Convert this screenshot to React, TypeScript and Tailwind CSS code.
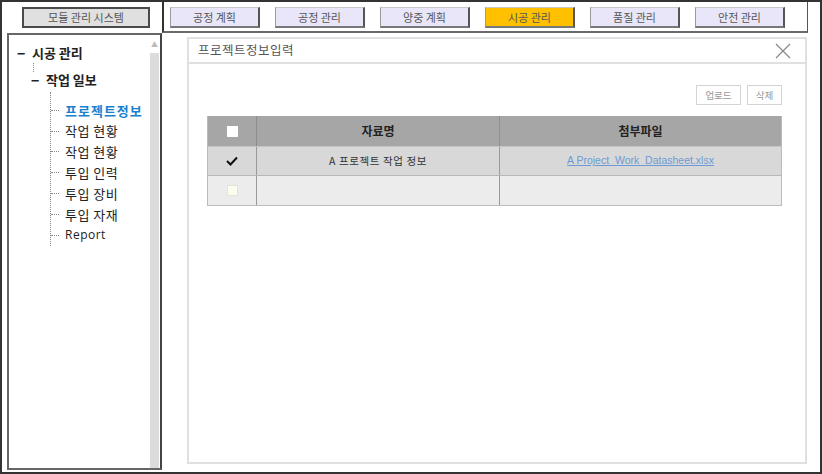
import React from "react";

const navItems = ["공정 계획", "공정 관리", "양중 계획", "시공 관리", "품질 관리", "안전 관리"];
const treeItems = ["프로젝트정보", "작업 현황", "작업 현황", "투입 인력", "투입 장비", "투입 자재", "Report"];

const font = { fontFamily: '"Noto Sans CJK KR", "Noto Sans", sans-serif' };

function NavButton({ label }: { label: string }) {
  const active = label === "시공 관리";
  return (
    <div
      className={
        "w-[90px] h-[21px] flex items-center justify-center text-[11px] border border-l-[#9a9a9a] border-t-[#c8c8c8] border-r-2 border-b-2 border-r-[#555] border-b-[#777] " +
        (active ? "bg-[#ffc000] text-[#555]" : "bg-[#e8e6f8] text-[#555]")
      }
    >
      {label}
    </div>
  );
}

export default function App() {
  return (
    <div className="w-[822px] h-[474px] border-2 border-[#333] bg-white flex flex-col overflow-hidden" style={font}>
      {/* top bar */}
      <div className="h-[31px] flex shrink-0">
        <div className="w-[160px] pl-[20px] pt-[5px]">
          <div className="w-[128px] h-[21px] bg-[#e0e0e0] border-2 border-[#4a4a4a] flex items-center justify-center text-[11px] text-[#555]">
            모듈 관리 시스템
          </div>
        </div>
        <div className="w-[646px] border-l-2 border-r border-b-2 border-l-[#333] border-r-[#555] border-b-[#6a6a6a] flex items-start pt-[5px] pl-[6px] gap-[15px]">
          {navItems.map((n) => (
            <NavButton key={n} label={n} />
          ))}
        </div>
      </div>

      <div className="flex flex-1">
        {/* sidebar */}
        <div className="ml-[5px] w-[155px] h-[437px] border-2 border-[#666] border-r-[#444] flex">
          <div className="flex-1 relative pt-[8px]">
            <div className="flex items-center h-[20px] pl-[8px] text-[13px] font-bold text-[#222]">
              <span className="w-[15px] text-[14px]">−</span>
              <span>시공 관리</span>
            </div>
            <div className="ml-[24px] h-[9px] w-0 border-l border-dotted border-[#888]" />
            <div className="flex items-center h-[16px] pl-[22px] text-[13px] font-bold text-[#222]">
              <span className="w-[15px] text-[14px]">−</span>
              <span>작업 일보</span>
            </div>
            <div className="ml-[41px] mt-[4px] border-l border-dotted border-[#888] pt-[8px] w-[100px]">
              {treeItems.map((t, i) => (
                <div key={i} className="flex items-center h-[20.8px]">
                  <span className="w-[8px] border-t border-dotted border-[#888] mr-[6px]" />
                  <span
                    className={
                      i === 0
                        ? "text-[13px] font-bold text-[#1a80d0] tracking-[1px]"
                        : "text-[13px] text-[#222] tracking-[0.5px]"
                    }
                    style={i === 6 ? { fontFamily: '"Open Sans", "Noto Sans", sans-serif', fontSize: 12 } : undefined}
                  >
                    {t}
                  </span>
                </div>
              ))}
            </div>
          </div>
          <div className="w-[10px] flex flex-col mr-[1px]">
            <div className="h-[18px] flex items-center justify-center text-[7px] text-[#bbb]">▲</div>
            <div className="flex-1 bg-[#dcdcdc]" />
          </div>
        </div>

        {/* main panel */}
        <div className="ml-[25px] mt-[4px] w-[620px] h-[427px] border-2 border-[#e0e0e0] flex flex-col">
          <div className="h-[25px] border-b-2 border-[#e0e0e0] flex items-center justify-between pl-[9px] pr-[14px]">
            <span className="text-[12.5px] text-[#555] tracking-[0.5px]">프로젝트정보입력</span>
            <svg width="16" height="16" viewBox="0 0 16 16">
              <path d="M1 1 L15 15 M15 1 L1 15" stroke="#888" strokeWidth="1.2" fill="none" />
            </svg>
          </div>
          <div className="flex justify-end gap-[6px] pr-[23px] pt-[21px]">
            <div className="w-[45px] h-[20px] border border-[#d4d4d4] flex items-center justify-center text-[9.5px] text-[#999]">업로드</div>
            <div className="w-[35px] h-[20px] border border-[#d4d4d4] flex items-center justify-center text-[9.5px] text-[#999]">삭제</div>
          </div>
          <div className="ml-[18px] mt-[11px] w-[575px] border border-[#bbb] border-t-0">
            <div className="flex h-[31px] bg-[#a6a6a6] text-[12px] font-bold text-[#222] border-b border-[#c4c4c4]">
              <div className="w-[49px] flex items-center justify-center border-r border-[#8e8e8e]">
                <div className="w-[11px] h-[11px] bg-white" />
              </div>
              <div className="w-[243px] flex items-center justify-center border-r border-[#8e8e8e]">자료명</div>
              <div className="flex-1 flex items-center justify-center">첨부파일</div>
            </div>
            <div className="flex h-[29px] bg-[#d8d8d8] text-[10.5px] text-[#333] border-b border-[#b8b8b8]">
              <div className="w-[49px] flex items-center justify-center border-r border-[#999]">
                <svg width="12" height="10" viewBox="0 0 12 10">
                  <path d="M1 5 L4.5 8.5 L11 1.5" stroke="#111" strokeWidth="2" fill="none" />
                </svg>
              </div>
              <div className="w-[243px] flex items-center justify-center border-r border-[#999] tracking-[0.6px]">A 프로젝트 작업 정보</div>
              <div className="flex-1 flex items-center justify-center">
                <span className="text-[#6d9ad6] underline text-[10.5px]" style={{ fontFamily: '"Liberation Sans", sans-serif' }}>
                  A Project_Work_Datasheet.xlsx
                </span>
              </div>
            </div>
            <div className="flex h-[29px] bg-[#ececec]">
              <div className="w-[49px] flex items-center justify-center border-r border-[#999]">
                <div className="w-[11px] h-[11px] bg-[#fbfbee] border border-[#e4e4d4]" />
              </div>
              <div className="w-[243px] border-r border-[#999]" />
              <div className="flex-1" />
            </div>
          </div>
        </div>
      </div>
    </div>
  );
}
